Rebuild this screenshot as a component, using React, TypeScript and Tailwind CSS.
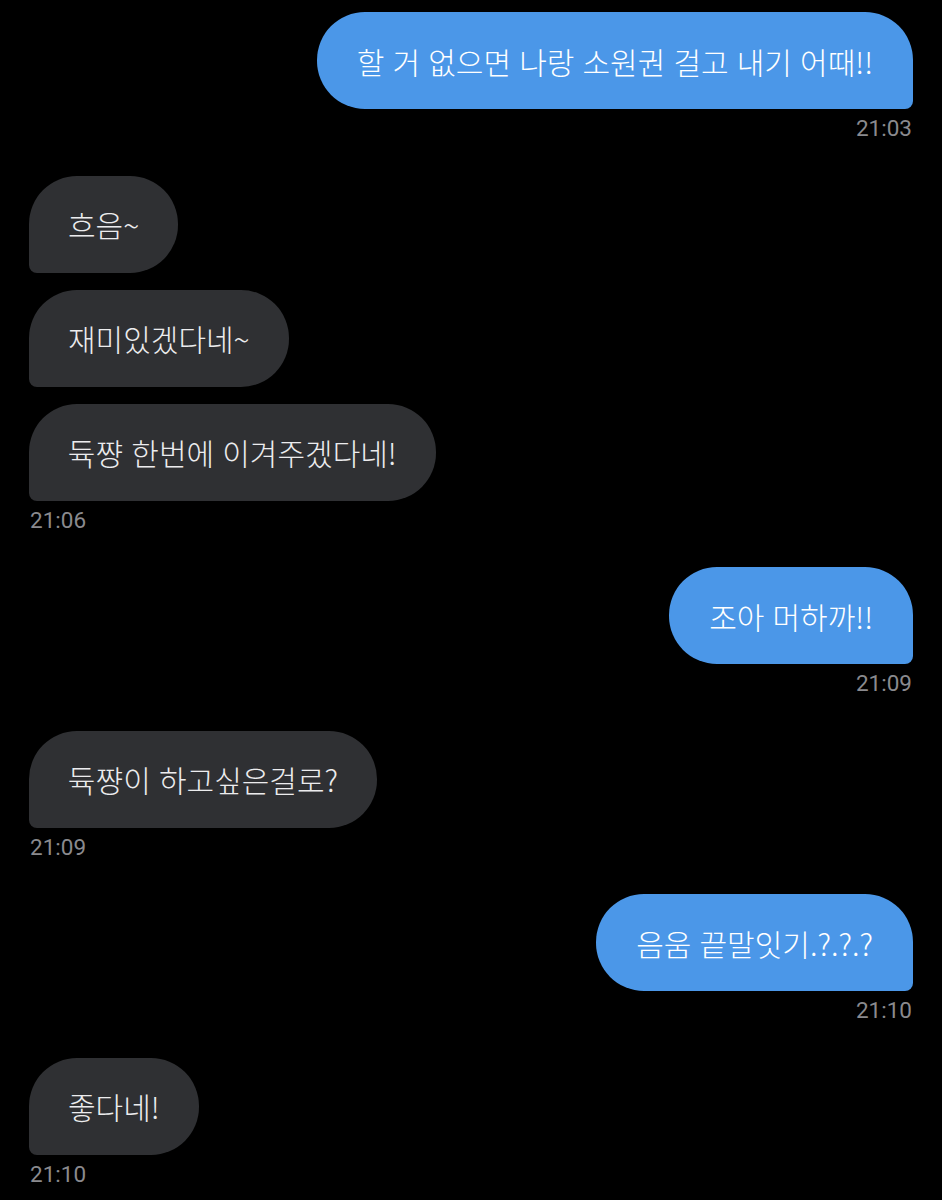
import { FC } from 'react';

type Msg = {
  mine: boolean;
  lines: string[];
  time: string;
};

const messages: Msg[] = [
  { mine: true, lines: ['할 거 없으면 나랑 소원권 걸고 내기 어때!!'], time: '21:03' },
  { mine: false, lines: ['흐음~', '재미있겠다네~', '듁쨩 한번에 이겨주겠다네!'], time: '21:06' },
  { mine: true, lines: ['조아 머하까!!'], time: '21:09' },
  { mine: false, lines: ['듁쨩이 하고싶은걸로?'], time: '21:09' },
  { mine: true, lines: ['음움 끝말잇기.?.?.?'], time: '21:10' },
  { mine: false, lines: ['좋다네!'], time: '21:10' },
];

const Bubble: FC<{ text: string; mine: boolean }> = ({ text, mine }) => (
  <div
    className={
      mine
        ? 'h-[97px] flex items-center px-[40px] rounded-[48px] rounded-br-[8px] bg-[#4b97e8] text-white'
        : 'h-[97px] flex items-center px-[39px] rounded-[48px] rounded-bl-[8px] bg-[#2f3033] text-[#ececee]'
    }
  >
    <span
      className="text-[30px] leading-none whitespace-nowrap font-light [word-spacing:1.5px]"
      style={{ fontFamily: '"Noto Sans CJK KR", "Noto Sans", sans-serif' }}
    >
      {text}
    </span>
  </div>
);

export default function App() {
  return (
    <div className="min-h-[1200px] w-full bg-black px-[29px] pt-[12px] flex flex-col gap-[33.5px]">
      {messages.map((m, i) => (
        <div
          key={i}
          className={`flex flex-col ${m.mine ? 'items-end' : 'items-start'}`}
        >
          <div className={`flex flex-col gap-[17px] ${m.mine ? 'items-end' : 'items-start'}`}>
            {m.lines.map((l, j) => (
              <Bubble key={j} text={l} mine={m.mine} />
            ))}
          </div>
          <div
            className="mt-[5px] h-[28px] leading-[28px] text-[22.5px] text-[#8a8a8e] px-[1px]"
            style={{ fontFamily: 'Roboto, "Liberation Sans", sans-serif' }}
          >
            {m.time}
          </div>
        </div>
      ))}
    </div>
  );
}
